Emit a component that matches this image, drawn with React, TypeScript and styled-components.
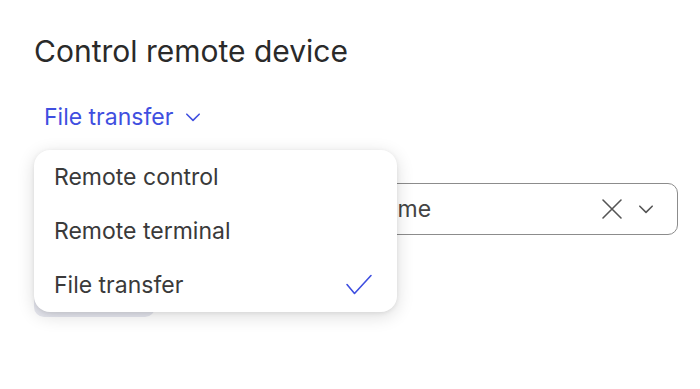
import React, { useState } from "react";
import styled, { createGlobalStyle } from "styled-components";

const GlobalStyle = createGlobalStyle`
    html, body {
        margin: 0;
        padding: 0;
        background: #ffffff;
        font-family: Inter, "Open Sans", sans-serif;
    }
`;

const StyledPage = styled.div`
    width: 700px;
    height: 389px;
    box-sizing: border-box;
    padding: 33px 22px 0 34px;
    display: flex;
    flex-direction: column;
    overflow: hidden;
`;
const StyledTitle = styled.h1`
    margin: 0;
    font-size: 30px;
    font-weight: 400;
    color: #2a2a2a;
    line-height: 36px;
`;
const StyledModeWrap = styled.div`
    position: relative;
    margin-top: 34px;
    align-self: flex-start;
`;
const StyledModeButton = styled.button`
    display: flex;
    align-items: center;
    gap: 11px;
    border: none;
    background: none;
    padding: 0 10px;
    font-family: inherit;
    font-size: 23px;
    color: #3f4fe0;
    line-height: 28px;
    cursor: pointer;
`;
const StyledMenu = styled.ul`
    position: absolute;
    top: 47px;
    left: 0;
    width: 363px;
    margin: 0;
    padding: 0;
    list-style: none;
    background: #ffffff;
    border-radius: 16px;
    box-shadow: 0 4px 18px rgba(0, 0, 0, 0.14), 0 1px 4px rgba(0, 0, 0, 0.08);
    z-index: 10;
    overflow: hidden;
`;
const StyledMenuItem = styled.li<{ $selected: boolean }>`
    display: flex;
    align-items: center;
    justify-content: space-between;
    height: 54px;
    padding: 0 24px 0 20px;
    font-size: 23px;
    color: #3a3a3a;
    cursor: pointer;
`;
const StyledForm = styled.div`
    display: flex;
    flex-direction: column;
    gap: 40px;
    margin-top: 52px;
`;
const StyledSelect = styled.div`
    display: flex;
    align-items: center;
    height: 52px;
    box-sizing: border-box;
    border: 1px solid #8c8c8c;
    border-radius: 10px;
    padding: 0 22px 0 20px;
`;
const StyledSelectText = styled.span`
    flex: 1;
    font-size: 23px;
    color: #444444;
    padding-left: 235px;
`;
const StyledSelectIcons = styled.div`
    display: flex;
    align-items: center;
    gap: 14px;
    color: #555555;
`;
const StyledSubmit = styled.button`
    width: 121px;
    height: 42px;
    border: none;
    border-radius: 10px;
    background: #e6e7ef;
`;

const modes = ["Remote control", "Remote terminal", "File transfer"];

function Chevron(props: { size: number; color: string }) {
    return (
        <svg width={props.size} height={props.size} viewBox="0 0 16 16" fill="none">
            <path d="M2.5 5.5 L8 11 L13.5 5.5" stroke={props.color} strokeWidth="1.4" strokeLinecap="round" strokeLinejoin="round" />
        </svg>
    );
}

export default function App() {
    const [mode, setMode] = useState("File transfer");
    const [open, setOpen] = useState(true);

    return (
        <>
            <GlobalStyle />
            <StyledPage>
                <StyledTitle>Control remote device</StyledTitle>
                <StyledModeWrap>
                    <StyledModeButton onClick={() => setOpen(!open)}>
                        {mode}
                        <Chevron size={18} color="#3f4fe0" />
                    </StyledModeButton>
                    {open ?
                        <StyledMenu>
                            {modes.map((m) => (
                                <StyledMenuItem key={m} $selected={m == mode} onClick={() => { setMode(m); setOpen(false); }}>
                                    {m}
                                    {m == mode ?
                                        <svg width="28" height="24" viewBox="0 0 28 24" fill="none">
                                            <path d="M2 11.5 L9.5 20.5 L26 2.5" stroke="#3f4fe0" strokeWidth="1.6" strokeLinecap="round" strokeLinejoin="round" />
                                        </svg> :
                                        <></>
                                    }
                                </StyledMenuItem>
                            ))}
                        </StyledMenu> :
                        <></>
                    }
                </StyledModeWrap>
                <StyledForm>
                    <StyledSelect>
                        <StyledSelectText>Device name</StyledSelectText>
                        <StyledSelectIcons>
                            <svg width="22" height="22" viewBox="0 0 22 22" fill="none">
                                <path d="M2 2 L20 20 M20 2 L2 20" stroke="#555" strokeWidth="1.6" strokeLinecap="round" />
                            </svg>
                            <Chevron size={18} color="#555" />
                        </StyledSelectIcons>
                    </StyledSelect>
                    <StyledSubmit aria-label="Connect" />
                </StyledForm>
            </StyledPage>
        </>
    );
}
